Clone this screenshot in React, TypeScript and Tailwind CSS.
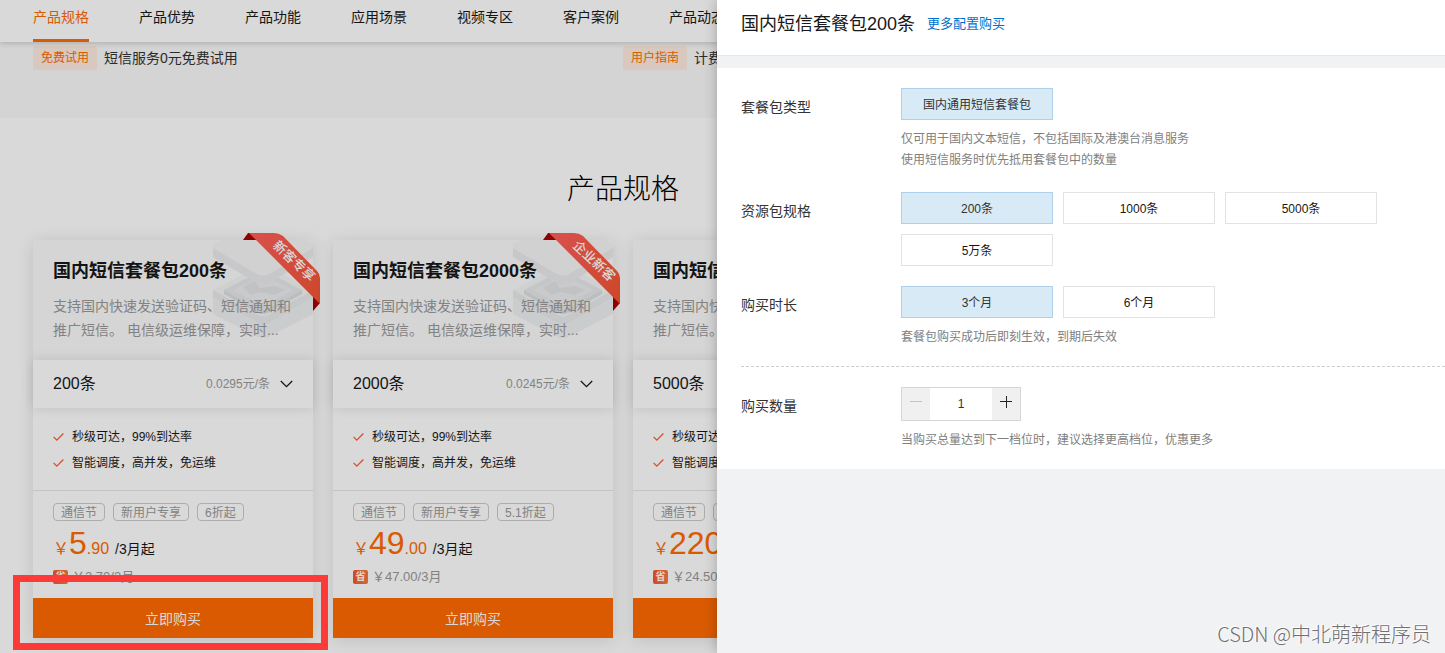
import { useState } from "react";

const FONT = "font-['Liberation_Sans','Noto_Sans_CJK_SC',sans-serif]";

const navItems = ["产品规格", "产品优势", "产品功能", "应用场景", "视频专区", "客户案例", "产品动态"];

const guides = [
  { tag: "免费试用", text: "短信服务0元免费试用" },
  { tag: "用户指南", text: "计费说明" },
];

interface Plan {
  count: string;
  unit: string;
  ribbon?: string;
  tags: string[];
  yuan: string;
  cents: string;
  saved: string;
  marked?: boolean;
}

const plans: Plan[] = [
  { count: "200条", unit: "0.0295元/条", ribbon: "新客专享", tags: ["通信节", "新用户专享", "6折起"], yuan: "5", cents: ".90", saved: "2.70", marked: true },
  { count: "2000条", unit: "0.0245元/条", ribbon: "企业新客", tags: ["通信节", "新用户专享", "5.1折起"], yuan: "49", cents: ".00", saved: "47.00" },
  { count: "5000条", unit: "0.044元/条", tags: ["通信节", "5折起"], yuan: "220", cents: ".50", saved: "24.50" },
];

const features = ["秒级可达，99%到达率", "智能调度，高并发，免运维"];

function Ribbon({ id, text }: { id: string; text: string }) {
  return (
    <svg className="absolute -right-[7px] -top-[7px]" width="77" height="78" viewBox="0 0 77 78">
      <defs>
        <linearGradient id={id} x1="0" y1="0" x2="1" y2="1">
          <stop offset="0" stopColor="#ff5f5c" />
          <stop offset="1" stopColor="#f25430" />
        </linearGradient>
      </defs>
      <path d="M0 7 5 0H13V7Z" fill="#a80000" />
      <path d="M70 60 77 70 70 78Z" fill="#a80000" />
      <path d="M4 0H31Q36 0 40 3L74 38Q77 41 77 45V71L6 0Z" fill={`url(#${id})`} />
      <text x="51" y="28" fontSize="13" fontWeight="500" fill="#fff" textAnchor="middle" dominantBaseline="central" transform="rotate(43 51 28)">
        {text}
      </text>
    </svg>
  );
}

function Slabs() {
  return (
    <svg className="absolute right-0 top-0" width="100" height="100" viewBox="0 0 100 100">
      <path d="M0 50V74L45 97Q50 99 55 97L100 74V50L50 80Z" fill="#eff0f1" />
      <path d="M0 50 50 24 100 50 55 75Q50 78 45 75Z" fill="#f4f5f5" />
      <path d="M0 50V57L45 83Q50 86 55 83L100 57V50L55 75Q50 78 45 75Z" fill="#e9eaec" />
      <path d="M11 50 50 30 89 50 55 69Q50 71 45 69Z" fill="#e6e8ea" />
      <path d="M11 50V54L45 73Q50 75 55 73L89 54V50L55 69Q50 71 45 69Z" fill="#dcdee1" />
      <path d="M20 50 50 35 80 50 54 64Q50 66 46 64Z" fill="#eceeef" />
      <path d="M30 47 42 41 47 48 62 46 72 50 62 55 47 52 38 55Z" fill="#e2e4e7" />
      <path d="M0 4V17L42 42Q50 47 58 42L100 17V4Z" fill="#ebecee" />
      <path d="M0 4 8 0H92L100 4V8L58 33Q50 38 42 33L0 8Z" fill="#f6f6f7" />
    </svg>
  );
}

function PlanCard({ plan }: { plan: Plan }) {
  return (
    <article className="relative w-[280px] shrink-0 bg-white shadow-[0_2px_16px_rgba(0,0,0,0.12)]">
      <div className="relative bg-[#fbfbfb] px-5 pt-4 pb-[18px]">
        <Slabs />
        <h3 className="relative text-lg leading-[30px] font-bold text-[#181818]">国内短信套餐包{plan.count}</h3>
        <p className="relative mt-2 text-sm leading-6 text-[#999]">
          支持国内快速发送验证码、短信通知和
          <br />
          推广短信。 电信级运维保障，实时...
        </p>
        {plan.ribbon && <Ribbon id={`ribbon-${plan.count}`} text={plan.ribbon} />}
      </div>
      <button type="button" className="relative flex h-12 w-full items-center bg-white px-5 shadow-[0_0_12px_rgba(0,0,0,0.12)]">
        <span className="text-base text-[#181818]">{plan.count}</span>
        <span className="ml-auto text-xs text-[#999]">{plan.unit}</span>
        <svg className="ml-2.5" width="13" height="8" viewBox="0 0 13 8" fill="none" stroke="#181818" strokeWidth="1.3">
          <path d="M0.8 1 6.5 6.6 12.2 1" />
        </svg>
      </button>
      <ul className="border-b border-[#e6e6e6] px-5 pt-4 pb-[14px]">
        {features.map((f) => (
          <li key={f} className="flex items-center gap-2 text-xs leading-[26px] text-[#181818]">
            <svg width="11" height="9" viewBox="0 0 11 9" fill="none" stroke="#f5603c" strokeWidth="1.3">
              <path d="M0.6 3.9 3.8 7.1 10.4 0.5" />
            </svg>
            {f}
          </li>
        ))}
      </ul>
      <div className="px-5 pt-3 pb-[11px]">
        <div className="flex gap-2">
          {plan.tags.map((t) => (
            <span key={t} className="h-[18px] shrink-0 rounded border border-[#ccc] px-[7px] pt-px text-xs leading-4 text-[#999]">
              {t}
            </span>
          ))}
        </div>
        <div className="flex items-baseline pb-0.5 leading-[44px] text-[#ff6a00]">
          <span className="w-4 text-base leading-none">￥</span>
          <span className="text-[32px]">{plan.yuan}</span>
          <span className="text-base leading-none">{plan.cents}</span>
          <span className="ml-1.5 text-sm leading-none text-[#181818]">/3月起</span>
        </div>
        <div className="flex items-center gap-1 leading-5 text-[#999]">
          <span className="flex h-3.5 w-[15px] items-center justify-center rounded-xs bg-linear-to-r from-[#f5552e] to-[#f57a40] text-[10px] font-bold text-white">省</span>
          <span className="text-[13px]">￥{plan.saved}/3月</span>
        </div>
      </div>
      <div className="relative">
        <button type="button" className="h-10 w-full bg-[#ff6a00] pt-px text-sm text-white">立即购买</button>
        {plan.marked && <div className="pointer-events-none absolute -top-[23px] -right-[15px] -bottom-3 -left-5 z-20 border-7 border-[#fc3a38]" />}
      </div>
    </article>
  );
}

function OptionRow({ id, label, options, help }: { id: string; label: string; options: string[]; help?: string[] }) {
  const [selected, setSelected] = useState(options[0]);
  return (
    <div className="flex">
      <div id={id} className="w-40 shrink-0 text-sm leading-[38px] text-[#333]">{label}</div>
      <div className="flex-1">
        <div role="group" aria-labelledby={id} className="flex flex-wrap gap-2.5">
          {options.map((o) => (
            <button
              key={o}
              type="button"
              aria-pressed={o === selected}
              onClick={() => setSelected(o)}
              className={
                o === selected
                  ? "h-8 w-[152px] border border-[#afd0eb] bg-[#d8eaf6] pt-0.5 text-xs text-[#333]"
                  : "h-8 w-[152px] border border-[#e3e3e3] bg-white pt-0.5 text-xs text-[#181818]"
              }
            >
              {o}
            </button>
          ))}
        </div>
        {help && (
          <div className="mt-[9px] pb-px text-xs leading-[21px] text-[#808080]">
            {help.map((h) => (
              <p key={h}>{h}</p>
            ))}
          </div>
        )}
      </div>
    </div>
  );
}

function QuantityRow() {
  const [count, setCount] = useState(1);
  return (
    <div className="flex">
      <label htmlFor="quantity" className="w-40 shrink-0 text-sm leading-[38px] text-[#333]">购买数量</label>
      <div className="flex-1">
        <div className="flex h-[34px] w-[120px] border border-[#d6d6d6]">
          <button type="button" aria-label="减少" onClick={() => setCount(Math.max(1, count - 1))} className="flex w-7 justify-center bg-[#f0f0f0] pt-2">
            <svg width="12" height="12" viewBox="0 0 12 12" stroke="#c4c4c4"><path d="M0 5.5H12" /></svg>
          </button>
          <input
            id="quantity"
            value={count}
            onChange={(e) => setCount(Number(e.target.value) || 1)}
            className="min-w-0 flex-1 bg-white text-center text-xs text-[#333] outline-none"
          />
          <button type="button" aria-label="增加" onClick={() => setCount(count + 1)} className="flex w-7 justify-center bg-[#f0f0f0] pt-2">
            <svg width="12" height="12" viewBox="0 0 12 12" stroke="#222"><path d="M0 5.5H12M6.5 0V12" /></svg>
          </button>
        </div>
        <p className="mt-[9px] pb-px text-xs leading-[21px] text-[#808080]">当购买总量达到下一档位时，建议选择更高档位，优惠更多</p>
      </div>
    </div>
  );
}

function Drawer() {
  return (
    <aside className="absolute inset-y-0 right-0 z-30 w-[728px] bg-[#f1f2f4] shadow-[0_0_12px_rgba(0,0,0,0.25)]">
      <header className="flex items-center gap-3 border-b border-[#e4e7e9] bg-white px-6 pt-[9px] pb-4">
        <h2 className="text-lg leading-[30px] text-[#181818]">国内短信套餐包200条</h2>
        <a href="#more" className="text-[13px] text-[#0070cc]">更多配置购买</a>
      </header>
      <form className="mt-3 bg-white pl-6" onSubmit={(e) => e.preventDefault()}>
        <div className="flex flex-col gap-5 border-b border-dashed border-[#ccc] pt-5 pb-[17px]">
          <OptionRow
            id="package-type"
            label="套餐包类型"
            options={["国内通用短信套餐包"]}
            help={["仅可用于国内文本短信，不包括国际及港澳台消息服务", "使用短信服务时优先抵用套餐包中的数量"]}
          />
          <OptionRow id="package-size" label="资源包规格" options={["200条", "1000条", "5000条", "5万条"]} />
          <OptionRow id="duration" label="购买时长" options={["3个月", "6个月"]} help={["套餐包购买成功后即刻生效，到期后失效"]} />
        </div>
        <div className="pt-5 pb-[17px]">
          <QuantityRow />
        </div>
      </form>
      <p className="absolute right-3.5 bottom-1 font-['Noto_Sans_CJK_SC',sans-serif] text-xl leading-[30px] font-light text-[#707070] [text-shadow:-1px_-1px_0_#fff]">
        CSDN @中北萌新程序员
      </p>
    </aside>
  );
}

export default function App() {
  return (
    <div className={`relative h-screen overflow-hidden bg-white ${FONT}`}>
      <nav className="relative flex gap-[50px] bg-white pl-[33px] shadow-[0_1px_6px_rgba(0,0,0,0.2)]">
        {navItems.map((item, i) => (
          <a
            key={item}
            href={`#section-${i}`}
            className={
              i === 0
                ? "shrink-0 border-b-3 border-[#ff6a00] pb-1 text-sm leading-[35px] text-[#ff6a00]"
                : "shrink-0 border-b-3 border-transparent pb-1 text-sm leading-[35px] text-[#181818]"
            }
          >
            {item}
          </a>
        ))}
      </nav>
      <section className="bg-[#f9f9f9] pt-1 pb-12 pl-[33px]">
        <div className="grid w-[1180px] grid-cols-2">
          {guides.map((g) => (
            <div key={g.tag} className="flex items-center gap-[7px] text-sm leading-6 text-[#333]">
              <span className="rounded-xs bg-[#ffebde] px-2 text-xs leading-6 text-[#ff6a00]">{g.tag}</span>
              {g.text}
            </div>
          ))}
        </div>
      </section>
      <main className="w-[1213px] pt-[52px] pl-[33px]">
        <h2 className="mb-[30px] text-center text-[28px] leading-10 font-light text-black">产品规格</h2>
        <div className="flex gap-5">
          {plans.map((p) => (
            <PlanCard key={p.count} plan={p} />
          ))}
        </div>
      </main>
      <div className="absolute inset-0 z-10 bg-black/15" />
      <Drawer />
    </div>
  );
}
